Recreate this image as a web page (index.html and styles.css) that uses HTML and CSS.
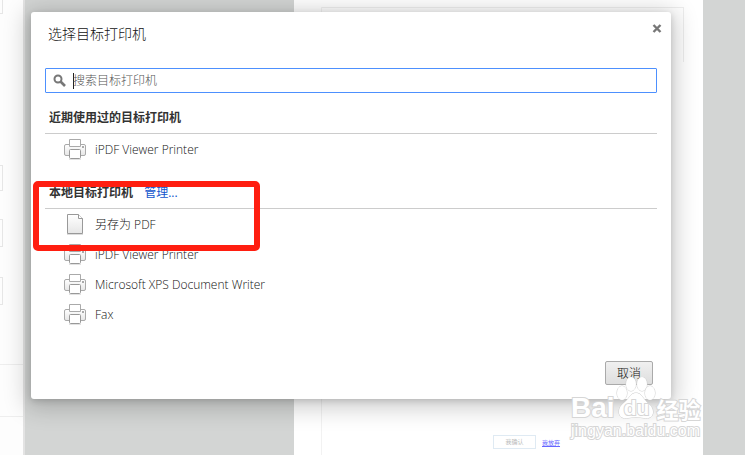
FILE: index.html
```
<!DOCTYPE html>
<html lang="zh-CN">
<head>
    <meta charset="UTF-8">
    <meta name="viewport" content="width=device-width, initial-scale=1.0">
    <title>选择目标打印机</title>
    <link rel="stylesheet" href="styles.css">
</head>
<body>
    <svg class="defs" aria-hidden="true">
        <defs>
            <linearGradient id="shade" x1="0" y1="0" x2="0" y2="1">
                <stop offset="0" stop-color="#fff"/>
                <stop offset="1" stop-color="#e6e6e6"/>
            </linearGradient>
        </defs>
        <symbol id="printer" viewBox="0 0 24 24">
            <rect x="1.500" y="7.500" width="21" height="11" rx="1.500" fill="url(#shade)" stroke="#aaa"/>
            <path d="M6.500 9.500V2.500H17.500V9.500Z" fill="#fff" stroke="#aaa"/>
            <rect x="19" y="9" width="2" height="2" fill="#aaa"/>
            <path d="M6 22.500H18" stroke="#e2e2e2"/>
            <rect x="6.500" y="12.500" width="11" height="9" rx="1" fill="#fff" stroke="#999"/>
        </symbol>
        <symbol id="document" viewBox="0 0 24 24">
            <path d="M4.500 2.500H15.500L19.500 6.500V21.500H4.500Z" fill="url(#shade)" stroke="#999"/>
            <path d="M15.500 2.500V6.500H19.500" fill="#fff" stroke="#999"/>
            <path d="M4 22.500H20" stroke="#ddd"/>
        </symbol>
    </svg>

    <div class="preview">
        <aside class="sidebar">
            <div class="option option-top"></div>
            <div class="option option-copies"></div>
            <div class="option option-pages"></div>
            <div class="option option-layout"></div>
            <div class="more"></div>
        </aside>
        <main class="paper">
            <div class="frame"><div class="frame-head"></div></div>
            <div class="sheet-actions">
                <button class="confirm" type="button">我确认</button>
                <a class="giveup" href="#">我放弃</a>
            </div>
        </main>
    </div>

    <section class="dialog" role="dialog" aria-labelledby="dialog-title">
        <header class="dialog-header">
            <h1 id="dialog-title">选择目标打印机</h1>
            <button class="close" type="button" aria-label="关闭">
                <svg width="10" height="10" viewBox="0 0 10 10"><path d="M1.500 1L8.500 8M8.500 1L1.500 8" stroke="#777" stroke-width="2.400"/></svg>
            </button>
        </header>

        <label class="search">
            <svg width="14" height="14" viewBox="0 0 14 14" fill="none" stroke="#777"><circle cx="5" cy="5" r="3.500" stroke-width="2"/><path d="M7.500 7.500L12 12" stroke-width="2.600"/></svg>
            <span class="caret"></span>
            <input type="text" placeholder="搜索目标打印机" aria-label="搜索目标打印机">
        </label>

        <div class="group">
            <h2>近期使用过的目标打印机</h2>
            <ul>
                <li><svg class="icon"><use href="#printer"/></svg>iPDF Viewer Printer</li>
            </ul>
        </div>

        <div class="group">
            <h2>本地目标打印机 <a href="#">管理...</a></h2>
            <ul>
                <li><svg class="icon"><use href="#document"/></svg>另存为 PDF</li>
                <li><svg class="icon"><use href="#printer"/></svg>iPDF Viewer Printer</li>
                <li><svg class="icon"><use href="#printer"/></svg>Microsoft XPS Document Writer</li>
                <li><svg class="icon"><use href="#printer"/></svg>Fax</li>
            </ul>
            <div class="highlight"></div>
        </div>

        <footer class="dialog-footer">
            <button class="cancel" type="button">取消</button>
        </footer>
    </section>

    <div class="watermark">
        <svg class="paw" width="40" height="44" viewBox="0 0 40 44">
            <ellipse cx="6" cy="16" rx="5" ry="7"/>
            <ellipse cx="15" cy="7" rx="5" ry="7"/>
            <ellipse cx="26" cy="7" rx="5" ry="7"/>
            <ellipse cx="34" cy="16" rx="5" ry="7"/>
            <path d="M20 16C15 16 14 20 11 23C7 27 3 29 3 35C3 40 7 42 12 41C17 40 23 40 28 41C33 42 37 40 37 35C37 29 32 27 29 23C26 20 25 16 20 16Z"/>
        </svg>
        <div class="brand"><span>Bai</span><span class="du">du</span><span class="jingyan">经验</span></div>
        <div class="site">jingyan.baidu.com</div>
    </div>
</body>
</html>
```
FILE: styles.css
```
* {
    box-sizing: border-box;
}
body {
    margin: 0;
    min-height: 100vh;
    position: relative;
    overflow: hidden;
    font-family: "Open Sans", "Noto Sans CJK SC", sans-serif;
    font-size: 12px;
    font-weight: 300;
    color: #111;
    background: #d3d5d4;
}
h1, h2, ul {
    margin: 0;
    padding: 0;
}
a {
    color: #15c;
    text-decoration: none;
}
button {
    font-family: inherit;
    padding: 0;
}
.defs {
    position: absolute;
    width: 0;
    height: 0;
}

/* page behind the dialog */
.preview {
    display: flex;
    height: 100vh;
}
.sidebar {
    width: 25px;
    background: #fdfdfd;
    border-right: 2px solid #e3e3e3;
}
.option {
    width: 3px;
    height: 26px;
    border: 1px solid #e6e6e6;
    border-left: 0;
}
.option-top {
    height: 14px;
    border-top: 0;
}
.option-copies {
    margin-top: 151px;
}
.option-pages {
    margin-top: 28px;
    height: 28px;
}
.option-layout {
    margin-top: 30px;
    height: 28px;
}
.more {
    margin-top: 59px;
    height: 53px;
    border-top: 1px solid #eee;
    border-bottom: 1px solid #eee;
}
.paper {
    display: flex;
    flex-direction: column;
    flex: 1;
    margin: 0 42px 0 269px;
    padding: 7px 19px 0 27px;
    background: #fff;
}
.frame {
    flex: 1;
    border-left: 1px solid #f2f2f2;
}
.frame-head {
    height: 55px;
    border-top: 1px solid #eee;
    border-right: 1px solid #eee;
}
.sheet-actions {
    display: flex;
    align-items: center;
    gap: 6px;
    padding: 0 0 6px 171px;
    border-left: 1px solid #f2f2f2;
    font-size: 6px;
}
.confirm {
    width: 43px;
    height: 14px;
    border: 1px solid #dfeaf3;
    background: #fff;
    color: #bbb;
    font-size: 6px;
    line-height: 10px;
}
.giveup {
    color: #66f;
    font-weight: normal;
    text-decoration: underline;
}

.dialog {
    position: absolute;
    top: 12px;
    left: 31px;
    right: 74px;
    padding: 12px 14px 14px;
    background: #fff;
    border-radius: 3px;
    box-shadow: 0 4px 23px 5px rgba(0, 0, 0, 0.2), 0 2px 6px rgba(0, 0, 0, 0.15);
}
.dialog-header {
    display: flex;
    justify-content: space-between;
    padding-left: 3px;
    height: 44px;
}
.dialog-header h1 {
    font-size: 14px;
    font-weight: 300;
    line-height: 20px;
}
.close {
    width: 10px;
    height: 10px;
    margin-right: -5px;
    border: 0;
    background: none;
}
.close svg {
    display: block;
}
.search {
    display: flex;
    align-items: center;
    height: 25px;
    padding-left: 7px;
    border: 1px solid #4d90fe;
    border-radius: 1px;
}
.caret {
    width: 1px;
    height: 16px;
    margin: 0 -1px 0 6px;
    background: #222;
}
.search input {
    flex: 1;
    padding: 0;
    border: 0;
    outline: 0;
    background: none;
    font: inherit;
}
.search input::placeholder {
    color: #555;
}

.group {
    position: relative;
}
.group h2 {
    height: 45px;
    padding: 21px 4px 0;
    border-bottom: 1px solid #ccc;
    color: #333;
    font-size: 12px;
    line-height: 16px;
}
.search + .group h2 {
    height: 41px;
    padding-top: 17px;
}
.group h2 a {
    margin-left: 8px;
    font-weight: normal;
}
.group li {
    display: flex;
    align-items: center;
    gap: 8px;
    height: 30px;
    padding-left: 18px;
}
.icon {
    width: 24px;
    height: 24px;
}
.highlight {
    position: absolute;
    top: 17px;
    left: -12px;
    width: 227px;
    height: 70px;
    border: 6px solid #ff1e10;
    border-radius: 5px;
}
.dialog-footer {
    display: flex;
    justify-content: flex-end;
    padding: 32px 4px 0;
}
.cancel {
    width: 48px;
    height: 24px;
    border: 1px solid #aaa;
    border-radius: 2px;
    background: linear-gradient(#f0f0f0, #dedede);
    color: #111;
    font-size: 12px;
    font-weight: 300;
}

.watermark {
    position: absolute;
    right: 42px;
    bottom: 14px;
    width: 132px;
    color: #fff;
    font-family: "Liberation Sans", "Noto Sans CJK SC", sans-serif;
    font-weight: normal;
    -webkit-text-stroke: 2px #d6d6d6;
    paint-order: stroke fill;
}
.brand {
    display: flex;
    align-items: center;
    height: 26px;
    font-size: 28px;
    font-weight: bold;
}
.paw {
    position: absolute;
    left: 45px;
    top: -18px;
    fill: #fff;
    stroke: #ccc;
}
.brand span {
    position: relative;
}
.brand .du {
    width: 36px;
    margin: 0 2px 0 4px;
    font-size: 21px;
    text-align: center;
}
.brand .jingyan {
    font-size: 22px;
}
.site {
    font-size: 16px;
    line-height: 20px;
}
```
